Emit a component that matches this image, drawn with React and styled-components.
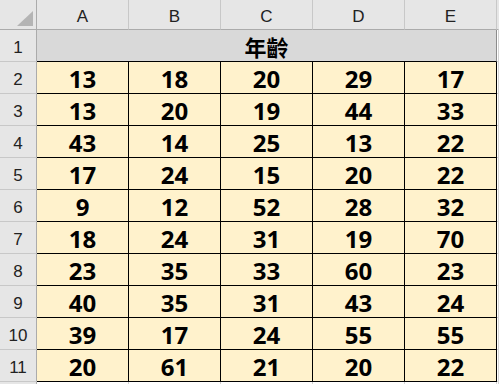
import React from "react";
import styled, { createGlobalStyle } from "styled-components";

const GlobalStyle = createGlobalStyle`
  html, body {
    margin: 0;
    padding: 0;
    background: #ffffff;
    overflow: hidden;
  }
`;

const rows = [
  [13, 18, 20, 29, 17],
  [13, 20, 19, 44, 33],
  [43, 14, 25, 13, 22],
  [17, 24, 15, 20, 22],
  [9, 12, 52, 28, 32],
  [18, 24, 31, 19, 70],
  [23, 35, 33, 60, 23],
  [40, 35, 31, 43, 24],
  [39, 17, 24, 55, 55],
  [20, 61, 21, 20, 22],
];

const letters = ["A", "B", "C", "D", "E"];

const Sheet = styled.div`
  display: grid;
  grid-template-columns: 37px repeat(5, 92px) 1fr;
  grid-template-rows: 30px repeat(11, 32px) 32px;
  width: 499px;
  height: 384px;
  overflow: hidden;
`;

const Corner = styled.div`
  position: relative;
  background: #e6e6e6;
  border-right: 1px solid #ababab;
  border-bottom: 1px solid #ababab;
  box-sizing: border-box;

  &::after {
    content: "";
    position: absolute;
    right: 3px;
    bottom: 3px;
    border-style: solid;
    border-width: 0 0 15px 16px;
    border-color: transparent transparent #b4b4b4 transparent;
  }
`;

const ColHead = styled.div`
  display: flex;
  align-items: center;
  justify-content: center;
  background: #e6e6e6;
  border-right: 1px solid ${(p) => (p.$last ? "#e6e6e6" : "#c8c8c8")};
  border-bottom: 1px solid #ababab;
  box-sizing: border-box;
  font-family: "Liberation Sans", Arial, sans-serif;
  font-size: 17px;
  color: #222222;
  padding-top: 4px;
`;

const RowHead = styled.div`
  display: flex;
  align-items: center;
  justify-content: center;
  background: #e6e6e6;
  border-right: 1px solid #ababab;
  border-bottom: 1px solid #c8c8c8;
  box-sizing: border-box;
  font-family: "Liberation Sans", Arial, sans-serif;
  font-size: 17px;
  color: #222222;
  padding-top: 5px;
`;

const TitleCell = styled.div`
  grid-column: 2 / span 5;
  display: flex;
  align-items: center;
  justify-content: center;
  background: #d9d9d9;
  border-right: 1px solid #8c8c8c;
  border-bottom: 1px solid #000000;
  box-sizing: border-box;
  font-family: "Noto Sans CJK TC", "Noto Sans CJK SC", sans-serif;
  font-weight: 700;
  font-size: 22px;
  color: #000000;
`;

const DataCell = styled.div`
  display: flex;
  align-items: center;
  justify-content: center;
  background: #fff2cc;
  border-right: 1px solid #000000;
  border-bottom: 1px solid #000000;
  box-sizing: border-box;
  font-family: "Open Sans", "Liberation Sans", sans-serif;
  font-weight: 700;
  font-size: 24px;
  color: #000000;
  padding-top: 1px;
`;

const BlankCell = styled.div`
  background: #ffffff;
  border-right: 1px solid #d4d4d4;
  border-bottom: 1px solid #d4d4d4;
  box-sizing: border-box;
`;

export default function App() {
  return (
    <>
      <GlobalStyle />
      <Sheet>
        <Corner />
        {letters.map((l) => (
          <ColHead key={l}>{l}</ColHead>
        ))}
        <ColHead $last />

        <RowHead>1</RowHead>
        <TitleCell>年齡</TitleCell>
        <BlankCell />

        {rows.map((r, i) => (
          <React.Fragment key={i}>
            <RowHead>{i + 2}</RowHead>
            {r.map((v, j) => (
              <DataCell key={j}>{v}</DataCell>
            ))}
            <BlankCell />
          </React.Fragment>
        ))}

        <RowHead />
        {letters.map((l) => (
          <BlankCell key={l} />
        ))}
        <BlankCell />
      </Sheet>
    </>
  );
}
